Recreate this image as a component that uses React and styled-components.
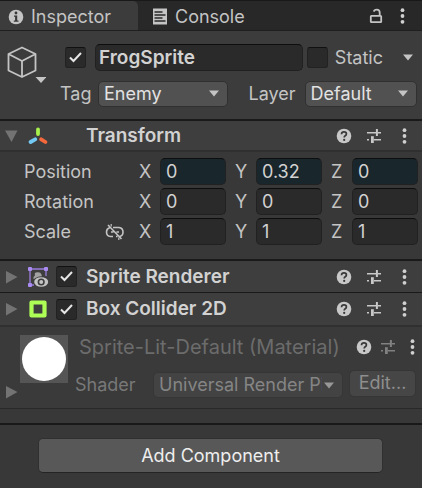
import React from "react";
import styled, { createGlobalStyle } from "styled-components";

const GlobalStyle = createGlobalStyle`
  * { box-sizing: border-box; }
  body {
    margin: 0;
    background: #383838;
    color: #c4c4c4;
    font-family: Inter, "Liberation Sans", sans-serif;
    font-size: 18px;
    line-height: 24px;
  }
  button, input, select { font: inherit; color: inherit; margin: 0; }
  svg { display: block; flex: none; }
`;

const Panel = styled.main`
  min-height: 100vh;
  background: #383838;
  border-top: 1px solid #191919;
`;

const TabBar = styled.div`
  display: flex;
  align-items: stretch;
  height: 30px;
  background: #282828;
  border-bottom: 1px solid #1f1f1f;
`;

const Tab = styled.button`
  display: flex;
  align-items: center;
  gap: 7px;
  padding: 2px 14px 0 ${(p) => (p.$active ? 8 : 14)}px;
  min-width: ${(p) => (p.$active ? 138 : 0)}px;
  border: 0;
  border-radius: 0 5px 0 0;
  background: ${(p) => (p.$active ? "#3c3c3c" : "transparent")};
  white-space: nowrap;
`;

const TabTools = styled.div`
  display: flex;
  align-items: center;
  gap: 17px;
  margin-left: auto;
  padding-right: 17px;
`;

const IconButton = styled.button`
  display: grid;
  place-items: center;
  padding: 0;
  border: 0;
  background: none;
  opacity: ${(p) => (p.$dim ? 0.5 : 1)};
`;

const ObjectHeader = styled.header`
  display: flex;
  gap: 14px;
  height: 88px;
  padding: 13px 5px 0 7px;
  background: #3c3c3c;
`;

const ObjectIcon = styled(IconButton)`
  align-self: flex-start;
`;

const ObjectFields = styled.div`
  flex: 1;
  min-width: 0;
  display: flex;
  flex-direction: column;
  gap: 9px;
`;

const ObjectRow = styled.div`
  display: flex;
  align-items: center;
  height: 27px;
  padding-left: ${(p) => p.$indent || 0}px;
`;

const CheckBoxWrap = styled.span`
  display: inline-grid;
  place-items: center;
  flex: none;
  > * { grid-area: 1 / 1; }
  svg { pointer-events: none; visibility: hidden; }
  input:checked + svg { visibility: visible; }
`;

const CheckInput = styled.input`
  appearance: none;
  width: 21px;
  height: 21px;
  border: 1px solid #222;
  border-top-color: #111;
  border-radius: 3px;
  background: #2a2a2a;
`;

const Field = styled.input`
  flex: 1;
  width: 0;
  min-width: 0;
  height: 27px;
  padding: 0 5px;
  border: 1px solid #212121;
  border-top-color: #0d0d0d;
  border-radius: 5px;
  outline: none;
  background: ${(p) => (p.$changed ? "#19262b" : "#2a2a2a")};
  color: #d2d2d2;
`;

const NameField = styled(Field)`
  margin: 0 4px 0 9px;
  padding: 0 3px;
  font-size: 19px;
  font-weight: 600;
`;

const StaticLabel = styled.label`
  display: flex;
  align-items: center;
  gap: 7px;
`;

const StaticMenu = styled(IconButton)`
  width: 34px;
  height: 20px;
  padding-left: 16px;
`;

const TagLabel = styled.label`
  width: 38px;
`;

const LayerLabel = styled.label`
  width: 56px;
  margin-left: 21px;
`;

const SelectWrap = styled.span`
  display: grid;
  align-items: center;
  flex: ${(p) => p.$grow || 1} 1 0;
  min-width: 0;
  > * { grid-area: 1 / 1; }
  svg { justify-self: end; margin-right: 8px; pointer-events: none; }
`;

const Select = styled.select`
  appearance: none;
  width: 100%;
  height: 26px;
  padding: 0 20px 0 5px;
  border: 1px solid ${(p) => (p.disabled ? "#363636" : "#303030")};
  border-radius: 5px;
  background: ${(p) => (p.disabled ? "#434343" : "#515151")};
  color: ${(p) => (p.disabled ? "#858585" : "#e2e2e2")};
  opacity: 1;
`;

const ComponentHeader = styled.div`
  display: flex;
  align-items: center;
  height: ${(p) => p.$height}px;
  padding: 0 11px 0 5px;
  border-top: ${(p) => p.$rule}px solid #1a1a1a;
  background: #3e3e3e;
`;

const Foldout = styled(IconButton)`
  width: 13px;
  height: 14px;
`;

const HeaderIcon = styled.span`
  width: 22px;
  margin-left: 10px;
`;

const CheckSlot = styled.span`
  display: flex;
  width: 36px;
  padding-left: 6px;
`;

const ComponentTitle = styled.h2`
  flex: 1;
  margin: 0;
  font-size: 19px;
  line-height: 24px;
  font-weight: 600;
  color: #d2d2d2;
  white-space: nowrap;
`;

const Tools = styled.div`
  display: flex;
  align-items: center;
  gap: ${(p) => (p.$tight ? 8 : 14)}px;
`;

const DotsButton = styled(IconButton)`
  width: 16px;
  margin-right: ${(p) => (p.$tight ? -5 : -1)}px;
`;

const TransformBody = styled.div`
  display: grid;
  gap: 3px;
  padding: 6px 4px 14px 24px;
  border-top: 2px solid #303030;
`;

const VectorRow = styled.fieldset`
  display: flex;
  align-items: center;
  min-width: 0;
  margin: 0;
  padding: 0;
  border: 0;
`;

const VectorName = styled.span`
  display: flex;
  align-items: center;
  justify-content: space-between;
  width: 115px;
  padding-right: 14px;
`;

const Axes = styled.div`
  flex: 1;
  display: grid;
  grid-template-columns: repeat(3, minmax(0, 1fr));
  gap: 9px;
`;

const Axis = styled.label`
  display: flex;
  align-items: center;
`;

const AxisName = styled.span`
  width: 21px;
`;

const Material = styled.section`
  display: flex;
  align-items: flex-start;
  height: 84px;
  padding: 8px 6px 0 5px;
  border-top: 2px solid #303030;
  border-bottom: 1px solid #282828;
  background: #3a3a3a;
`;

const MaterialFoldout = styled(Foldout)`
  align-self: flex-end;
  margin-bottom: 9px;
`;

const Preview = styled.div`
  display: grid;
  place-items: center;
  flex: none;
  width: 48px;
  height: 48px;
  margin-left: 2px;
  background: #555;
`;

const PreviewBall = styled.div`
  width: 44px;
  height: 44px;
  border-radius: 50%;
  background: #fff;
`;

const MaterialInfo = styled.div`
  flex: 1;
  min-width: 0;
  padding-left: 7px;
`;

const MaterialTop = styled.div`
  display: flex;
  align-items: center;
  gap: 11px;
  height: 24px;
  padding-left: 4px;
  margin-right: 1px;
`;

const MaterialTitle = styled.h2`
  flex: 1;
  min-width: 0;
  margin: 0;
  overflow: hidden;
  font-size: 20px;
  line-height: 24px;
  font-weight: 400;
  color: #6c6c6c;
  white-space: nowrap;
`;

const ShaderRow = styled.div`
  display: flex;
  align-items: center;
  margin-top: 9px;
  color: #787878;
`;

const ShaderLabel = styled.label`
  width: 78px;
  padding-top: 4px;
`;

const ShaderSelect = styled(SelectWrap)`
  padding-top: 4px;
`;

const EditButton = styled.button`
  width: 67px;
  height: 27px;
  margin-left: 6px;
  padding: 0;
  border: 1px solid #363636;
  border-radius: 5px;
  background: #464646;
  color: #8e8e8e;
`;

const Footer = styled.footer`
  margin-top: 14px;
  padding: 13px 39px 15px 38px;
  border-top: 2px solid #191919;
`;

const AddButton = styled.button`
  width: 100%;
  height: 35px;
  border: 1px solid #303030;
  border-bottom-color: #242424;
  border-radius: 5px;
  background: #585858;
  color: #eee;
`;

const CaretDown = ({ color = "#c4c4c4" }) => (
  <svg width="12" height="7" viewBox="0 0 12 7"><path d="M1 0.5h10L6 6.5z" fill={color} /></svg>
);

const Triangle = ({ open }) => (
  <svg width="13" height="14" viewBox="0 0 13 14">
    <path d={open ? "M0 1.5h12.5L6.5 13z" : "M1 1v12.5L12.5 7z"} fill="#737373" />
  </svg>
);

const InfoIcon = () => (
  <svg width="16" height="16" viewBox="0 0 16 16">
    <circle cx="8" cy="8" r="7.3" fill="#c4c4c4" />
    <path d="M6 6.5h3.2v5H10.5v1.3H5.8v-1.3h1.3V7.8H6z" fill="#383838" />
    <circle cx="8" cy="4" r="1.4" fill="#383838" />
  </svg>
);

const ConsoleIcon = () => (
  <svg width="16" height="17" viewBox="0 0 16 17">
    <path d="M1 .5h14v16H1z" fill="#c4c4c4" />
    <path d="M2.5 4h8M2.5 7h11M2.5 10h8M2.5 13h11" stroke="#282828" strokeWidth="1.3" />
  </svg>
);

const LockIcon = () => (
  <svg width="14" height="16" viewBox="0 0 14 16" fill="none" stroke="#c4c4c4" strokeWidth="1.8">
    <rect x="1.8" y="7.8" width="10.4" height="6.4" rx=".6" />
    <path d="M10.7 7.8V4.4Q10.7 1.6 7.8 1.6Q5.2 1.6 4.9 3.6" />
  </svg>
);

const DotsIcon = () => (
  <svg width="5" height="16" viewBox="0 0 5 16" fill="#d0d0d0">
    <circle cx="2.5" cy="2.2" r="1.9" /><circle cx="2.5" cy="8" r="1.9" /><circle cx="2.5" cy="13.8" r="1.9" />
  </svg>
);

const HelpIcon = () => (
  <svg width="16" height="16" viewBox="0 0 16 16">
    <circle cx="8" cy="8" r="7.3" fill="#c8c8c8" />
    <path d="M5.5 6.2Q5.6 3.9 8 3.9Q10.4 3.9 10.4 5.9Q10.4 7 9.2 7.7Q8.2 8.3 8.2 9.6" fill="none" stroke="#383838" strokeWidth="1.7" />
    <circle cx="8.2" cy="11.9" r="1.1" fill="#383838" />
  </svg>
);

const PresetIcon = () => (
  <svg width="16" height="16" viewBox="0 0 16 16" fill="none" stroke="#c8c8c8">
    <path d="M1 4.7h9M11.5 4.7H15M1 11.7h2M8 11.7h7" strokeWidth="1.4" />
    <path d="M10.9 1v7" strokeWidth="2" />
    <path d="M6.4 8.2v6.8" strokeWidth="2.8" />
  </svg>
);

const CubeIcon = () => (
  <svg width="39" height="40" viewBox="0 0 39 40">
    <path d="M15 3.5L28.5 10V26.5L15 33L1.5 26.5V10ZM1.5 10L15 17L28.5 10M15 17V33" fill="none" stroke="#c4c4c4" strokeWidth="1.8" strokeLinejoin="round" />
    <path d="M28.5 33h11L34 39z" fill="#c4c4c4" />
  </svg>
);

const TransformIcon = () => (
  <svg width="20" height="18" viewBox="0 0 20 18" strokeWidth="3.8" strokeLinecap="round">
    <path d="M10 2.5V7" stroke="#a8f04c" />
    <path d="M7.2 12.3L2.6 15" stroke="#74c8f4" />
    <path d="M13.2 12.3L17.4 15" stroke="#f4683c" />
  </svg>
);

const SpriteIcon = () => (
  <svg width="22" height="22" viewBox="0 0 22 22">
    <path d="M2 3H18V10M2 3V19H6" fill="none" stroke="#9b7edb" strokeWidth="1.3" />
    <g fill="#ab8cf4"><rect x="0" y="1" width="4" height="4" rx="1" /><rect x="16" y="1" width="4" height="4" rx="1" /><rect x="0" y="17" width="4" height="4" rx="1" /></g>
    <path d="M5.5 13V11L7 9.5Q5.8 6.3 9.5 6.2Q12.5 5.8 13.5 8.5L14 11Z" fill="#a2a2a2" />
    <ellipse cx="13.2" cy="16" rx="8" ry="5.8" fill="#3e3e3e" />
    <ellipse cx="13.2" cy="16" rx="7" ry="4.8" fill="#c4c4c4" />
    <circle cx="13.2" cy="16" r="3.6" fill="#3e3e3e" />
    <circle cx="13.2" cy="16" r="2" fill="#c4c4c4" />
  </svg>
);

const ColliderIcon = () => (
  <svg width="20" height="20" viewBox="0 0 20 20">
    <path d="M3.5 3.5h13v13h-13z" fill="none" stroke="#aeff55" strokeWidth="4.2" strokeLinejoin="round" />
  </svg>
);

const UnlinkIcon = () => (
  <svg width="20" height="16" viewBox="0 0 20 16" fill="none" stroke="#c4c4c4" strokeWidth="1.6">
    <path d="M8 12.5H5.5Q1.5 12.2 1.5 8Q1.5 4.7 4.7 3.8M8 3.5H14Q18 4 18 8Q18 11.8 14.8 12.4M12.5 12.5H11M6 8H8.5M11.5 8H14M3 1L16.5 15" />
    <path d="M6.2 0V2.5M13.8 13.5V16" strokeWidth="1.2" />
  </svg>
);

function CheckBox({ label, checked }) {
  return (
    <CheckBoxWrap>
      <CheckInput type="checkbox" aria-label={label} defaultChecked={checked} />
      <svg width="15" height="13" viewBox="0 0 15 13"><path d="M2 6.5L5.5 10L13 2" fill="none" stroke="#e6e6e6" strokeWidth="2" /></svg>
    </CheckBoxWrap>
  );
}

function ComponentTools({ tight }) {
  return (
    <Tools $tight={tight}>
      <IconButton aria-label="Help"><HelpIcon /></IconButton>
      <IconButton aria-label="Presets" $dim={tight}><PresetIcon /></IconButton>
      <DotsButton $tight={tight} aria-label="More options"><DotsIcon /></DotsButton>
    </Tools>
  );
}

const vectors = [
  { name: "Position", values: ["0", "0.32", "0"], changed: true },
  { name: "Rotation", values: ["0", "0", "0"] },
  { name: "Scale", values: ["1", "1", "1"], linkable: true },
];

function Vector({ name, values, changed, linkable }) {
  return (
    <VectorRow aria-label={name}>
      <VectorName>
        {name}
        {linkable && <IconButton aria-label="Constrain proportions"><UnlinkIcon /></IconButton>}
      </VectorName>
      <Axes>
        {["X", "Y", "Z"].map((axis, i) => (
          <Axis key={axis}>
            <AxisName>{axis}</AxisName>
            <Field $changed={changed} defaultValue={values[i]} />
          </Axis>
        ))}
      </Axes>
    </VectorRow>
  );
}

function ToggleComponent({ title, icon, height, rule }) {
  return (
    <ComponentHeader $height={height} $rule={rule}>
      <Foldout aria-label={`Expand ${title}`}><Triangle /></Foldout>
      <HeaderIcon>{icon}</HeaderIcon>
      <CheckSlot><CheckBox label={`Enable ${title}`} checked /></CheckSlot>
      <ComponentTitle>{title}</ComponentTitle>
      <ComponentTools />
    </ComponentHeader>
  );
}

export default function App() {
  return (
    <>
      <GlobalStyle />
      <Panel>
        <TabBar>
          <Tab $active><InfoIcon />Inspector</Tab>
          <Tab><ConsoleIcon />Console</Tab>
          <TabTools>
            <IconButton aria-label="Lock"><LockIcon /></IconButton>
            <IconButton aria-label="Window menu"><DotsIcon /></IconButton>
          </TabTools>
        </TabBar>

        <ObjectHeader>
          <ObjectIcon aria-label="Choose icon"><CubeIcon /></ObjectIcon>
          <ObjectFields>
            <ObjectRow $indent={5}>
              <CheckBox label="Active" checked />
              <NameField aria-label="Name" defaultValue="FrogSprite" />
              <StaticLabel><CheckBox />Static</StaticLabel>
              <StaticMenu aria-label="Static flags"><CaretDown /></StaticMenu>
            </ObjectRow>
            <ObjectRow>
              <TagLabel htmlFor="tag">Tag</TagLabel>
              <SelectWrap $grow={129}>
                <Select id="tag"><option>Enemy</option></Select>
                <CaretDown />
              </SelectWrap>
              <LayerLabel htmlFor="layer">Layer</LayerLabel>
              <SelectWrap $grow={112}>
                <Select id="layer"><option>Default</option></Select>
                <CaretDown />
              </SelectWrap>
            </ObjectRow>
          </ObjectFields>
        </ObjectHeader>

        <ComponentHeader $height={31} $rule={2}>
          <Foldout aria-label="Collapse Transform"><Triangle open /></Foldout>
          <HeaderIcon><TransformIcon /></HeaderIcon>
          <CheckSlot />
          <ComponentTitle>Transform</ComponentTitle>
          <ComponentTools />
        </ComponentHeader>
        <TransformBody>
          {vectors.map((v) => <Vector key={v.name} {...v} />)}
        </TransformBody>

        <ToggleComponent title="Sprite Renderer" icon={<SpriteIcon />} height={33} rule={2} />
        <ToggleComponent title="Box Collider 2D" icon={<ColliderIcon />} height={33} rule={1} />

        <Material>
          <MaterialFoldout aria-label="Expand material"><Triangle /></MaterialFoldout>
          <Preview><PreviewBall /></Preview>
          <MaterialInfo>
            <MaterialTop>
              <MaterialTitle>Sprite-Lit-Default (Material)</MaterialTitle>
              <ComponentTools tight />
            </MaterialTop>
            <ShaderRow>
              <ShaderLabel htmlFor="shader">Shader</ShaderLabel>
              <ShaderSelect>
                <Select id="shader" disabled><option>Universal Render Pipeline/2D/Sprite-Lit-Default</option></Select>
                <CaretDown color="#989898" />
              </ShaderSelect>
              <EditButton>Edit...</EditButton>
            </ShaderRow>
          </MaterialInfo>
        </Material>

        <Footer><AddButton>Add Component</AddButton></Footer>
      </Panel>
    </>
  );
}
